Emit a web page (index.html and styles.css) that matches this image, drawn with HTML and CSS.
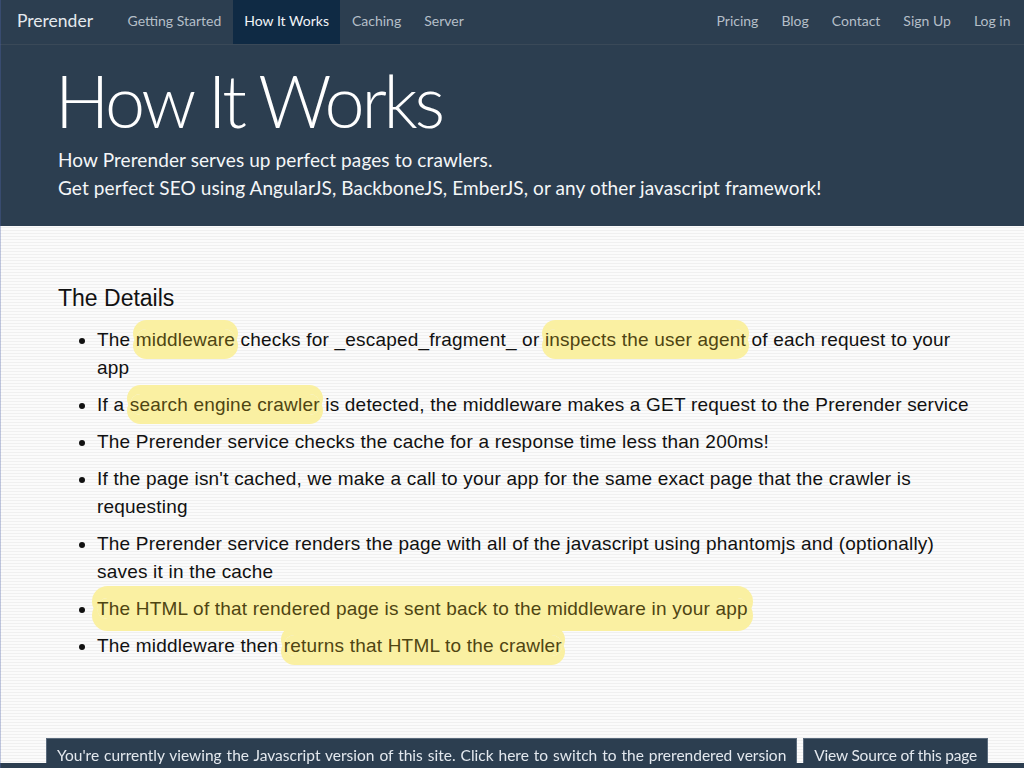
FILE: index.html
```html
<!DOCTYPE html>
<html lang="en">
<head>
<meta charset="utf-8">
<title>How It Works - Prerender</title>
<link rel="stylesheet" href="styles.css">
</head>
<body>
<nav class="navbar">
  <a class="brand" href="#">Prerender</a>
  <ul class="nav">
    <li><a href="#">Getting Started</a></li>
    <li class="active"><a href="#">How It Works</a></li>
    <li><a href="#">Caching</a></li>
    <li><a href="#">Server</a></li>
  </ul>
  <ul class="nav nav-right">
    <li><a href="#">Pricing</a></li>
    <li><a href="#">Blog</a></li>
    <li><a href="#">Contact</a></li>
    <li><a href="#">Sign Up</a></li>
    <li><a href="#">Log in</a></li>
  </ul>
</nav>

<header class="hero">
  <h1 class="hero-title">How It Works</h1>
  <p class="hero-sub">How Prerender serves up perfect pages to crawlers.<br>Get perfect SEO using AngularJS, BackboneJS, EmberJS, or any other javascript framework!</p>
</header>

<main class="content">
  <h2 class="section-title">The Details</h2>
  <ul class="details">
    <li>The <span class="hl">middleware</span> checks for _escaped_fragment_ or <span class="hl">inspects the user agent</span> of each request to your<br>app</li>
    <li>If a <span class="hl">search engine crawler</span> is detected, the middleware makes a GET request to the Prerender service</li>
    <li>The Prerender service checks the cache for a response time less than 200ms!</li>
    <li>If the page isn't cached, we make a call to your app for the same exact page that the crawler is requesting</li>
    <li>The Prerender service renders the page with all of the javascript using phantomjs and (optionally) saves it in the cache</li>
    <li><span class="hl hl-wide">The HTML of that rendered page is sent back to the middleware in your app</span></li>
    <li>The middleware then <span class="hl">returns that HTML to the crawler</span></li>
  </ul>
</main>

<div class="bottom-bar">
  <a class="tab" href="#">You're currently viewing the Javascript version of this site. Click here to switch to the prerendered version</a>
  <a class="tab tab-source" href="#">View Source of this page</a>
</div>
</body>
</html>
```
FILE: styles.css
```css
html, body {
  margin: 0;
  padding: 0;
}

body {
  min-height: 768px;
  font-family: "Liberation Sans", Arial, sans-serif;
  color: #111;
  background-color: #f6f6f6;
  background-image: repeating-linear-gradient(to bottom, #fbfbfb 0, #fbfbfb 2px, #f0f0f0 2px, #f0f0f0 3px);
}

body::before {
  content: "";
  position: fixed;
  left: 0;
  top: 0;
  bottom: 0;
  width: 1px;
  background: rgba(80, 100, 170, 0.35);
  z-index: 10;
}

a {
  text-decoration: none;
  color: inherit;
}

/* Navbar */
.navbar {
  display: flex;
  align-items: stretch;
  height: 44px;
  background: #2c3e50;
  border-bottom: 1px solid #3a4958;
  font-family: Lato, "Open Sans", sans-serif;
  padding-left: 2px;
}

.brand {
  display: flex;
  align-items: center;
  padding: 0 15px 3px;
  font-size: 17.5px;
  color: #e4e9ee;
  margin-right: 8px;
}

.nav {
  display: flex;
  list-style: none;
  margin: 0;
  padding: 0;
}

.nav li a {
  display: flex;
  align-items: center;
  height: 100%;
  box-sizing: border-box;
  padding: 0 11.5px 3px;
  font-size: 14px;
  color: #b5bfc8;
}

.nav li.active a {
  background: #0f2a44;
  color: #f2f5f8;
}

.nav-right {
  margin-left: auto;
  padding-right: 2px;
}

/* Hero */
.hero {
  background: #2c3e50;
  padding: 17px 58px 24px;
  color: #fff;
  font-family: Lato, "Open Sans", sans-serif;
}

.hero-title {
  margin: 0 0 0 -3px;
  font-size: 72px;
  font-weight: 300;
  line-height: 77px;
  letter-spacing: -3.3px;
}

.hero-sub {
  margin: 7px 0 0;
  font-size: 19px;
  line-height: 28px;
  letter-spacing: 0.1px;
  color: #f4f6f8;
}

/* Content */
.content {
  padding: 60px 40px 120px 58px;
}

.section-title {
  margin: 0 0 15px;
  font-size: 23px;
  font-weight: normal;
  line-height: 25px;
}

.details {
  margin: 0;
  padding-left: 39px;
  font-size: 19px;
  letter-spacing: 0.2px;
  line-height: 28px;
}

.details li {
  margin-bottom: 9px;
}

.hl {
  background: #faf0a2;
  color: #4f4512;
  border-radius: 12px;
  box-shadow: 0 -6px 0 3px #faf0a2, 0 6px 0 3px #faf0a2;
}

.hl-wide {
  box-shadow: 0 -7px 0 5px #faf0a2, 0 7px 0 5px #faf0a2;
  border-radius: 14px;
}

/* Bottom bar */
.bottom-bar {
  position: fixed;
  left: 0;
  right: 0;
  bottom: 0;
  display: flex;
  align-items: flex-end;
  gap: 6px;
  padding-left: 46px;
  border-bottom: 5px solid #2c3e50;
  font-family: Lato, "Open Sans", sans-serif;
}

.tab {
  display: block;
  height: 25px;
  box-sizing: border-box;
  padding: 7px 10px 0;
  line-height: 18px;
  font-size: 15.5px;
  word-spacing: 1px;
  color: #e3e8ee;
  background: #2c3e50;
  border: 1px solid #5a6a7c;
  border-bottom: none;
  white-space: nowrap;
}

.tab-source {
  letter-spacing: -0.2px;
  word-spacing: 0;
}
```
